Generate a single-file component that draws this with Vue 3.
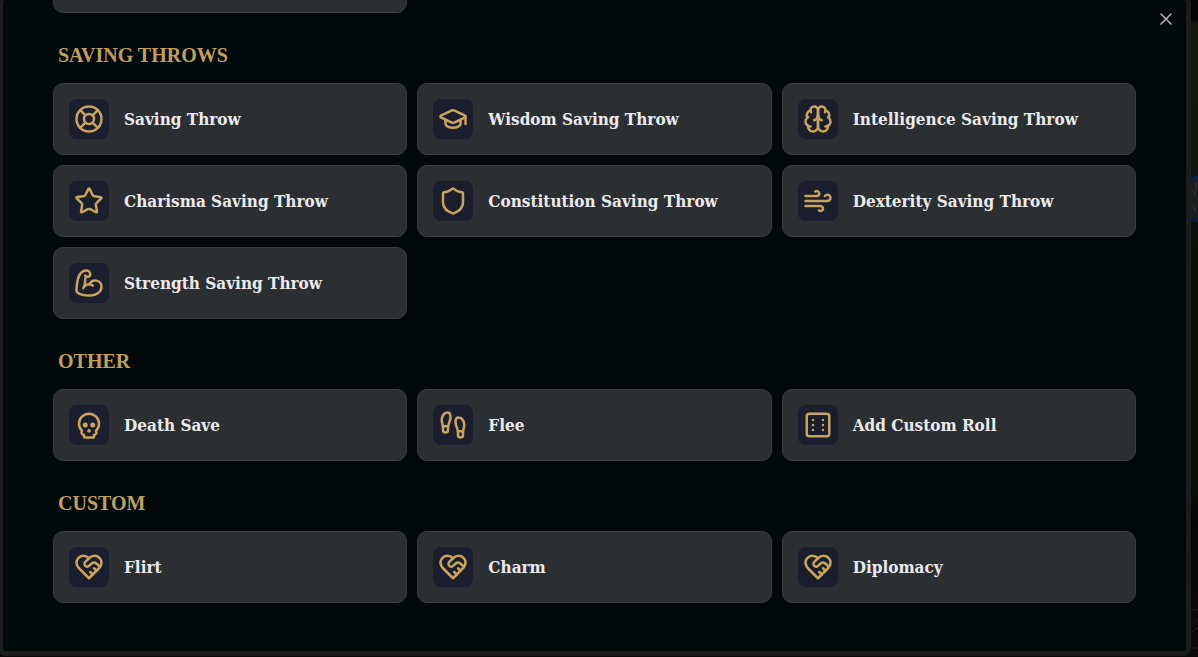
<script setup>
const icons = {
  buoy: [
    'M22 12a10 10 0 1 1-20 0 10 10 0 0 1 20 0z',
    'm4.93 4.93 4.24 4.24', 'm14.83 9.17 4.24-4.24', 'm14.83 14.83 4.24 4.24', 'm9.17 14.83-4.24 4.24',
    'M16 12a4 4 0 1 1-8 0 4 4 0 0 1 8 0z',
  ],
  cap: [
    'M21.42 10.922a1 1 0 0 0-.019-1.838L12.83 5.18a2 2 0 0 0-1.66 0L2.6 9.08a1 1 0 0 0 0 1.832l8.57 3.908a2 2 0 0 0 1.66 0z',
    'M22 10v6', 'M6 12.5V16a6 3 0 0 0 12 0v-3.5',
  ],
  brain: [
    'M12 5a3 3 0 1 0-5.997.125 4 4 0 0 0-2.526 5.77 4 4 0 0 0 .556 6.588A4 4 0 1 0 12 18Z',
    'M12 5a3 3 0 1 1 5.997.125 4 4 0 0 1 2.526 5.77 4 4 0 0 1-.556 6.588A4 4 0 1 1 12 18Z',
    'M15 13a4.5 4.5 0 0 1-3-4 4.5 4.5 0 0 1-3 4', 'M17.599 6.5a3 3 0 0 0 .399-1.375',
    'M6.003 5.125A3 3 0 0 0 6.401 6.5', 'M3.477 10.896a4 4 0 0 1 .585-.396',
    'M19.938 10.5a4 4 0 0 1 .585.396', 'M6 18a4 4 0 0 1-1.967-.516', 'M19.967 17.484A4 4 0 0 1 18 18',
  ],
  star: [
    'M11.525 2.295a.53.53 0 0 1 .95 0l2.31 4.679a2.123 2.123 0 0 0 1.595 1.16l5.166.756a.53.53 0 0 1 .294.904l-3.736 3.638a2.123 2.123 0 0 0-.611 1.878l.882 5.14a.53.53 0 0 1-.771.56l-4.618-2.428a2.122 2.122 0 0 0-1.973 0L6.396 21.01a.53.53 0 0 1-.77-.56l.881-5.139a2.122 2.122 0 0 0-.611-1.879L2.16 9.795a.53.53 0 0 1 .294-.906l5.165-.755a2.122 2.122 0 0 0 1.597-1.16z',
  ],
  shield: [
    'M20 13c0 5-3.5 7.5-7.66 8.95a1 1 0 0 1-.67-.01C7.5 20.5 4 18 4 13V6a1 1 0 0 1 1-1c2 0 4.5-1.2 6.24-2.72a1.17 1.17 0 0 1 1.52 0C14.51 3.81 17 5 19 5a1 1 0 0 1 1 1z',
  ],
  wind: ['M12.8 19.6A2 2 0 1 0 14 16H2', 'M17.5 8a2.5 2.5 0 1 1 2 4H2', 'M9.8 4.4A2 2 0 1 1 11 8H2'],
  biceps: [
    'M12.409 13.017A5 5 0 0 1 22 15c0 3.866-4 7-9 7-4.077 0-8.153-.82-10.371-2.462-.426-.316-.631-.832-.62-1.362C2.118 12.723 2.627 2 10 2a3 3 0 0 1 3 3 2 2 0 0 1-2 2c-1.105 0-1.64-.444-2-1',
    'M15 14a5 5 0 0 0-7.584 2', 'M9.964 6.825C8.019 7.977 9.5 13 8 15',
  ],
  skull: [
    'm12.5 17-.5-1-.5 1h1z',
    'M15 22a1 1 0 0 0 1-1v-1a2 2 0 0 0 1.56-3.25 8 8 0 1 0-11.12 0A2 2 0 0 0 8 20v1a1 1 0 0 0 1 1z',
    'M16 12a1 1 0 1 1-2 0 1 1 0 0 1 2 0z', 'M10 12a1 1 0 1 1-2 0 1 1 0 0 1 2 0z',
  ],
  footprints: [
    'M4 16v-2.38C4 11.5 2.97 10.5 3 8c.03-2.72 1.49-6 4.5-6C9.37 2 10 3.8 10 5.5c0 3.11-2 5.66-2 8.68V16a2 2 0 1 1-4 0Z',
    'M20 20v-2.38c0-2.12 1.03-3.12 1-5.62-.03-2.72-1.49-6-4.5-6C14.63 6 14 7.8 14 9.5c0 3.11 2 5.66 2 8.68V20a2 2 0 1 0 4 0Z',
    'M16 17h4', 'M4 13h4',
  ],
  dice: [
    'M5 3h14a2 2 0 0 1 2 2v14a2 2 0 0 1-2 2H5a2 2 0 0 1-2-2V5a2 2 0 0 1 2-2z',
    'M16 8h.01', 'M16 12h.01', 'M16 16h.01', 'M8 8h.01', 'M8 12h.01', 'M8 16h.01',
  ],
  heart: [
    'M19 14c1.49-1.46 3-3.21 3-5.5A5.5 5.5 0 0 0 16.5 3c-1.76 0-3 .5-4.5 2-1.5-1.5-2.74-2-4.5-2A5.5 5.5 0 0 0 2 8.5c0 2.3 1.5 4.05 3 5.5l7 7Z',
    'M12 5 9.04 7.96a2.17 2.17 0 0 0 0 3.08c.82.82 2.13.85 3 .07l2.07-1.9a2.82 2.82 0 0 1 3.79 0l2.96 2.66',
    'm18 15-2-2', 'm15 18-2-2',
  ],
}

const sections = [
  {
    title: 'SAVING THROWS',
    rolls: [
      ['Saving Throw', 'buoy'],
      ['Wisdom Saving Throw', 'cap'],
      ['Intelligence Saving Throw', 'brain'],
      ['Charisma Saving Throw', 'star'],
      ['Constitution Saving Throw', 'shield'],
      ['Dexterity Saving Throw', 'wind'],
      ['Strength Saving Throw', 'biceps'],
    ],
  },
  {
    title: 'OTHER',
    rolls: [['Death Save', 'skull'], ['Flee', 'footprints'], ['Add Custom Roll', 'dice']],
  },
  {
    title: 'CUSTOM',
    rolls: [['Flirt', 'heart'], ['Charm', 'heart'], ['Diplomacy', 'heart']],
  },
]
</script>

<template>
  <div class="page">
    <svg class="scene" viewBox="0 0 7 657" aria-hidden="true">
      <circle cx="10" cy="199" r="22" fill="#1c1d1e" stroke="#06204a" stroke-width="3" />
      <path d="M2 190l3 6M1 205l4 6M5 182v7" stroke="#2c2b2b" stroke-width="2" />
      <path d="M0 610h7M2 625l5-6M1 632l6-5M0 648h7" fill="none" stroke="#241d15" />
    </svg>
    <main class="modal">
      <button class="close" type="button" aria-label="Close">
        <svg viewBox="0 0 12 12" aria-hidden="true"><path d="M1 1l10 10M11 1L1 11" /></svg>
      </button>
      <div class="grid"><div class="card"></div></div>
      <section v-for="section in sections" :key="section.title">
        <h2>{{ section.title }}</h2>
        <div class="grid">
          <button v-for="[label, icon] in section.rolls" :key="label" class="card" type="button">
            <span class="tile">
              <svg viewBox="0 0 24 24" aria-hidden="true">
                <path v-for="d in icons[icon]" :key="d" :d="d" />
              </svg>
            </span>
            <span>{{ label }}</span>
          </button>
        </div>
      </section>
    </main>
  </div>
</template>

<style>
body {
  margin: 0;
  background: #080808;
}
</style>

<style scoped>
.page {
  position: relative;
  box-sizing: border-box;
  display: flex;
  height: 100vh;
  overflow: hidden;
  padding: 0 7px 1px 0;
  background: linear-gradient(#050505 20px, #14190a 24px, #10160a 150px, #101314 190px, #0b1008 260px, #0c0f08 480px, #050505 520px, #0c0a09);
}

.scene {
  position: absolute;
  top: 0;
  right: 0;
  width: 7px;
}

.modal {
  position: relative;
  box-sizing: border-box;
  flex: 1;
  display: flex;
  flex-direction: column;
  justify-content: flex-end;
  margin: -5px 0 0 -2px;
  padding: 0 50px 48px;
  border: 5px solid #1e1d1d;
  border-radius: 8px;
  background: #01090b;
  overflow: hidden;
}

h2 {
  margin: 0;
  padding: 30px 5px 16px;
  font: bold 20px/24px "Liberation Serif", serif;
  color: #c0a05a;
}

.grid {
  display: grid;
  grid-template-columns: repeat(3, minmax(0, 1fr));
  gap: 10px;
}

.card {
  box-sizing: border-box;
  display: flex;
  align-items: center;
  gap: 15px;
  min-height: 72px;
  padding: 15px;
  border: 1px solid #363c3f;
  border-radius: 10px;
  background: #2b2f32;
  color: #ebebed;
  font: bold 17px/24px "DejaVu Serif Condensed", "DejaVu Serif", serif;
  text-align: left;
  cursor: pointer;
}

.tile {
  display: flex;
  flex: none;
  align-items: center;
  justify-content: center;
  width: 40px;
  height: 40px;
  border-radius: 8px;
  background: #1a1e2d;
}

.tile svg {
  width: 30px;
  height: 30px;
  fill: none;
  stroke: #c8a55c;
  stroke-width: 2;
  stroke-linecap: round;
  stroke-linejoin: round;
}

.close {
  position: absolute;
  top: 9px;
  right: 10px;
  display: flex;
  align-items: center;
  justify-content: center;
  width: 20px;
  height: 20px;
  padding: 0;
  border: 0;
  background: none;
  cursor: pointer;
}

.close svg {
  width: 12px;
  height: 12px;
  fill: none;
  stroke: #b9b8b2;
  stroke-width: 1.5;
  stroke-linecap: round;
}
</style>
